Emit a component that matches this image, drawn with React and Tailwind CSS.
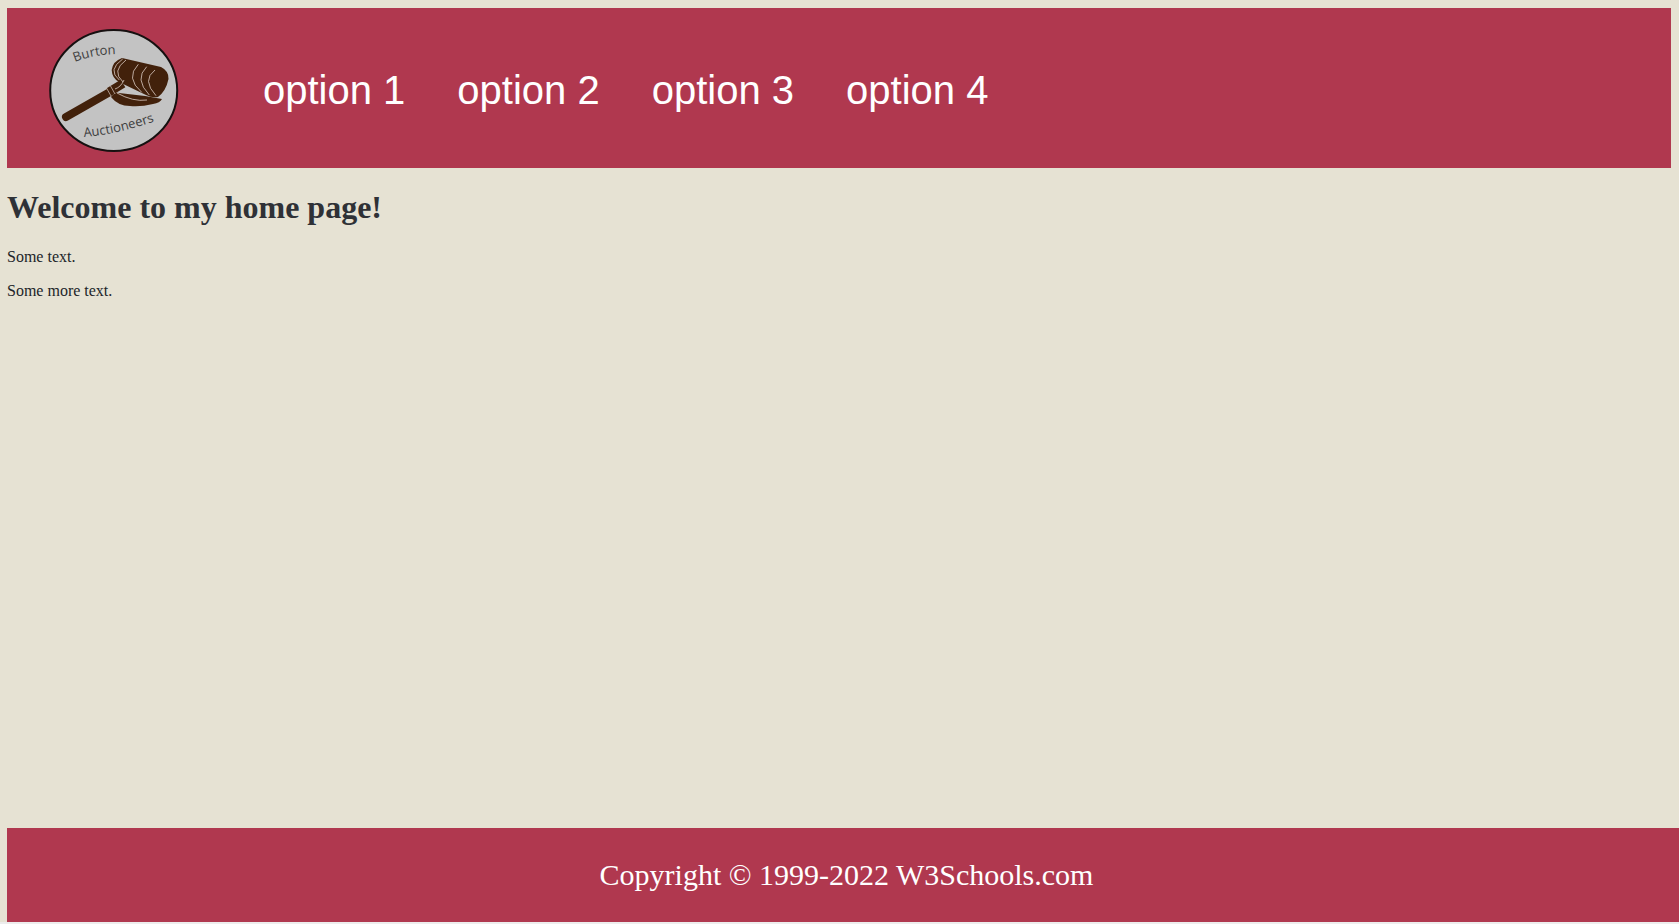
import React from 'react';

function Logo() {
  return (
    <svg width="130" height="126" viewBox="0 1 130 126" className="block">
      <defs>
        <path id="arcTop" d="M 26 34 Q 45 26 72 26" />
        <path id="arcBottom" d="M 35 109 Q 72 106 115 90" />
      </defs>
      <ellipse cx="64.7" cy="62.5" rx="63.5" ry="60.5" fill="#c3c3c3" stroke="#161010" strokeWidth="2" />
      <text fill="#404040" fontSize="13" fontFamily="'Open Sans', sans-serif">
        <textPath href="#arcTop">Burton</textPath>
      </text>
      <text fill="#404040" fontSize="13" fontFamily="'Open Sans', sans-serif">
        <textPath href="#arcBottom">Auctioneers</textPath>
      </text>
      {/* sound block */}
      <path d="M62 69 Q66 64 70 65 Q92 67 113 71 Q111 75 104 76 Q92 79 81 78 Q69 78 62 69 Z" fill="#42210b" />
      <path d="M68 65 Q84 74 98 72" fill="none" stroke="#c9b8ae" strokeWidth="0.9" />
      {/* handle */}
      <path d="M17 89 L60 64.5" stroke="#42210b" strokeWidth="8" strokeLinecap="round" />
      <path d="M60 64 L74 55.5" stroke="#42210b" strokeWidth="9" />
      <path d="M57.5 60 L62 68 M61.5 58 L66 66" stroke="#c9b8ae" strokeWidth="0.8" />
      {/* head */}
      <path d="M73 30 L112 39 Q120 43 119.5 51 Q117 63 109 69 Q103 70 97 67 L70 54 Q63 50 62.7 42 Q64 33 73 30 Z" fill="#42210b" />
      <path d="M73.7 31 Q58 42 70.3 52 M77 32 Q62 43 74 54 M89.3 36.3 Q76 50 92.7 64.3 M97.7 38.7 Q85 51 100.3 67 M106 42 Q92.5 52 107 67.7" fill="none" stroke="#c9b8ae" strokeWidth="0.9" />
      <path d="M66 61 Q72 59 75 52" fill="none" stroke="#c9b8ae" strokeWidth="0.9" />
    </svg>
  );
}

function App() {
  const options = ['option 1', 'option 2', 'option 3', 'option 4'];

  return (
    <div className="h-[924px] overflow-hidden bg-[#e6e2d3] flex flex-col font-['Liberation_Serif',serif] text-[#212529]">
      <header className="mt-2 ml-[7px] mr-2 h-40 shrink-0 bg-[#b0384f] flex items-center">
        <div className="ml-[42px] mt-2">
          <Logo />
        </div>
        <nav className="ml-[84px] mt-1 flex gap-[52px] font-['Liberation_Sans',sans-serif] text-[40px] text-white">
          {options.map((option) => (
            <span key={option}>{option}</span>
          ))}
        </nav>
      </header>

      <main className="ml-[7px] flex-1">
        <h1 className="mt-[21px] text-[32px] font-bold leading-[37px] text-[#2f3136]">Welcome to my home page!</h1>
        <p className="mt-[22px] text-base leading-[18px]">Some text.</p>
        <p className="mt-4 text-base leading-[18px]">Some more text.</p>
      </main>

      <footer className="ml-[7px] pb-0.5 h-[94px] w-full shrink-0 bg-[#b0384f] flex items-center justify-center text-[30px] text-white">
        Copyright © 1999-2022 W3Schools.com
      </footer>
      <div className="h-0.5 shrink-0 bg-[#ededed]" />
    </div>
  );
}

export default App;
